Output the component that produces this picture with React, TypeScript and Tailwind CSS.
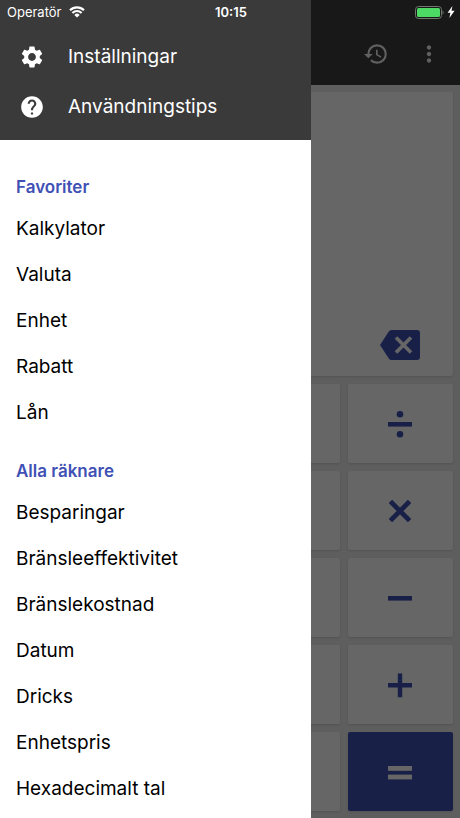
import React from "react";
import { MdHelp, MdHistory, MdMoreVert, MdSettings } from "react-icons/md";

const favorites = ["Kalkylator", "Valuta", "Enhet", "Rabatt", "Lån"];

const calculators = [
  "Besparingar",
  "Bränsleeffektivitet",
  "Bränslekostnad",
  "Datum",
  "Dricks",
  "Enhetspris",
  "Hexadecimalt tal",
];

const operators = [
  {
    id: "divide",
    icon: (
      <>
        <rect x="2" y="12" width="24" height="4.6" />
        <circle cx="14" cy="4.3" r="3.3" />
        <circle cx="14" cy="24.3" r="3.3" />
      </>
    ),
  },
  {
    id: "multiply",
    icon: (
      <path
        d="M4.4 4.4L23.6 23.6M23.6 4.4L4.4 23.6"
        stroke="currentColor"
        strokeWidth="4.8"
      />
    ),
  },
  { id: "minus", icon: <rect x="2" y="12" width="24" height="4.6" /> },
  {
    id: "plus",
    icon: <path d="M11.8 2.4h4.4v9.6H26v4.6h-9.8v9.6h-4.4v-9.6H2V12h9.8z" />,
  },
  {
    id: "equals",
    icon: (
      <>
        <rect x="2" y="8" width="24" height="4.8" />
        <rect x="2" y="16.6" width="24" height="4.8" />
      </>
    ),
  },
];

const StatusBar = () => (
  <div className="absolute inset-x-0 top-0 z-20 grid h-6 grid-cols-3 items-center pr-[5px] pl-[7px] text-[13px] leading-4 text-white">
    <div className="flex items-center gap-[7px]">
      <span>Operatör</span>
      <svg width="16" height="12" viewBox="0 0 16 12" fill="none">
        <path
          d="M1 4.2a10 10 0 0 1 14 0M3.4 6.9a6.6 6.6 0 0 1 9.2 0"
          stroke="currentColor"
          strokeWidth="2.1"
        />
        <path d="M8 11.6L5.3 8.9a3.9 3.9 0 0 1 5.4 0z" fill="currentColor" />
      </svg>
    </div>
    <span className="text-center font-semibold">10:15</span>
    <div className="flex items-center justify-end gap-[3px]">
      <svg width="29" height="13" viewBox="0 0 29 13" fill="none">
        <rect
          x="0.5"
          y="0.5"
          width="26"
          height="12"
          rx="3"
          stroke="#6b7a6b"
        />
        <rect x="2" y="2" width="23" height="9" rx="1.5" fill="#4cd964" />
        <path d="M27.5 4.5c1.5.6 1.5 3.4 0 4z" fill="#6b7a6b" />
      </svg>
      <svg width="8" height="12" viewBox="0 0 8 12" fill="currentColor">
        <path d="M5.4 0L.6 6.8h2.8L2.4 12 7.6 4.8H4.5z" />
      </svg>
    </div>
  </div>
);

const Calculator = () => (
  <div className="flex min-h-screen flex-col bg-[#ebebeb]">
    <header className="flex h-[85px] items-end justify-end gap-[27px] bg-[#3c3c3c] px-[18px] pb-[18px] text-[#f0f0f0]">
      <button type="button">
        <MdHistory size={26} />
      </button>
      <button type="button">
        <MdMoreVert size={26} />
      </button>
    </header>
    <main className="flex flex-1 flex-col gap-2 p-[7px]">
      <div className="flex flex-1 items-end justify-end rounded-xs bg-white px-[33px] pb-4 shadow-sm">
        <button type="button" className="text-[#3f51b5]">
          <svg width="40" height="30" viewBox="0 0 40 30" fill="none">
            <path
              d="M11.5 0H37a3 3 0 0 1 3 3v24a3 3 0 0 1-3 3H11.500Q9.800 30 8.800 28.500L0 15 8.800 1.500Q9.800 0 11.500 0z"
              fill="currentColor"
            />
            <path
              d="M16 7.500L31 22.500M31 7.500L16 22.500"
              stroke="#fff"
              strokeWidth="3.600"
            />
          </svg>
        </button>
      </div>
      <div className="grid grid-cols-4 gap-2">
        {operators.map(({ id, icon }) => (
          <React.Fragment key={id}>
            <div className="rounded-xs bg-white shadow-sm" />
            <div className="rounded-xs bg-white shadow-sm" />
            <div className="rounded-xs bg-white shadow-sm" />
            <button
              type="button"
              className={
                id === "equals"
                  ? "flex h-[79px] items-center justify-center rounded-xs bg-[#3f51b5] text-white shadow-sm"
                  : "flex h-[79px] items-center justify-center rounded-xs bg-white text-[#3f51b5] shadow-sm"
              }
            >
              <svg width="28" height="28" viewBox="0 0 28 28" fill="currentColor">
                {icon}
              </svg>
            </button>
          </React.Fragment>
        ))}
      </div>
    </main>
  </div>
);

const Section = ({ title, items }: { title: string; items: string[] }) => (
  <section>
    <h2 className="flex h-9 items-center text-[17px] font-semibold text-[#3f51b5]">
      {title}
    </h2>
    <ul>
      {items.map((item) => (
        <li key={item}>
          <a href="#" className="flex h-[46px] items-center text-[19px]">
            {item}
          </a>
        </li>
      ))}
    </ul>
  </section>
);

const Drawer = () => (
  <aside className="absolute inset-y-0 left-0 z-10 w-[311px] overflow-hidden bg-white text-black">
    <div className="bg-[#3a3a3a] px-[19px] pt-8 pb-2 text-[19px] text-white">
      <button type="button" className="flex h-[50px] items-center gap-[23px]">
        <MdSettings size={26} />
        Inställningar
      </button>
      <button type="button" className="flex h-[50px] items-center gap-[23px]">
        <MdHelp size={26} />
        Användningstips
      </button>
    </div>
    <nav className="flex flex-col gap-[18px] px-4 pt-[30px]">
      <Section title="Favoriter" items={favorites} />
      <Section title="Alla räknare" items={calculators} />
    </nav>
  </aside>
);

export default function App() {
  return (
    <div className="relative min-h-screen overflow-hidden font-[Inter,sans-serif]">
      <Calculator />
      <div className="absolute inset-0 bg-black/60" />
      <Drawer />
      <StatusBar />
    </div>
  );
}
